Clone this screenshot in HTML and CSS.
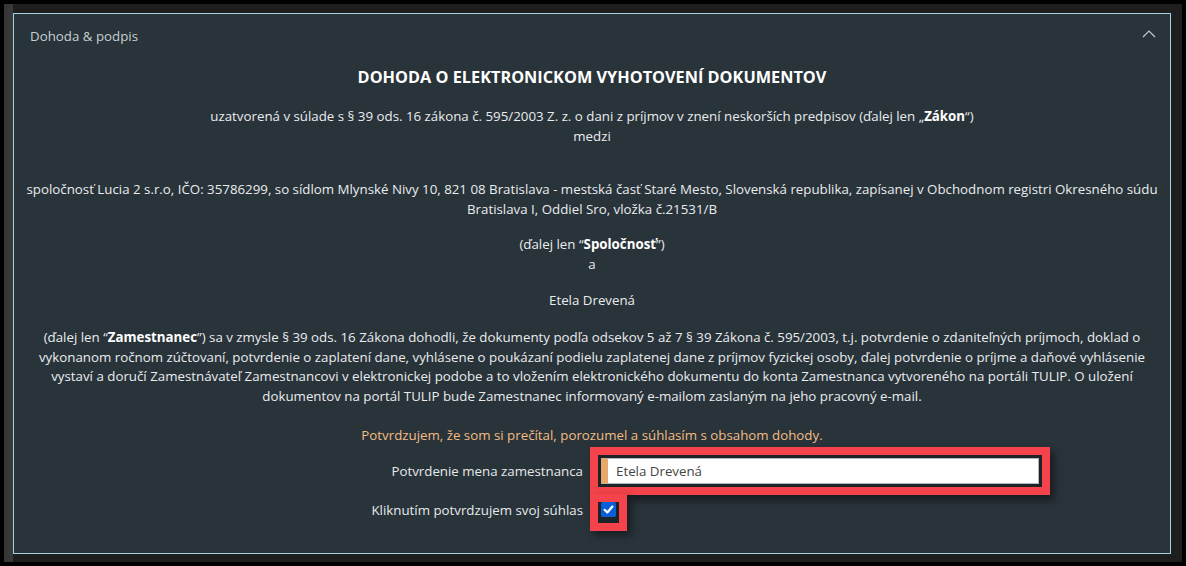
FILE: index.html
```html
<!DOCTYPE html>
<html lang="sk">
<head>
  <meta charset="UTF-8" />
  <title>Dohoda &amp; podpis</title>
  <link rel="stylesheet" href="styles.css">
</head>
<body>
  <div class="screen">
    <section class="panel">
      <div class="panel-head">
        <span>Dohoda &amp; podpis</span>
        <svg class="chevron" width="14" height="8" viewBox="0 0 14 8">
          <polyline points="1,7 7,1 13,7" fill="none" stroke="#c3cbcf" stroke-width="1.2"/>
        </svg>
      </div>

      <div class="panel-body">
        <h2 class="doc-title">DOHODA O ELEKTRONICKOM VYHOTOVENÍ DOKUMENTOV</h2>

        <p class="intro">uzatvorená v súlade s § 39 ods. 16 zákona č. 595/2003 Z. z. o dani z príjmov v znení neskorších predpisov (ďalej len „<b>Zákon</b>“)<br>medzi</p>

        <p class="party">spoločnosť Lucia 2 s.r.o, IČO: 35786299, so sídlom Mlynské Nivy 10, 821 08 Bratislava - mestská časť Staré Mesto, Slovenská republika, zapísanej v Obchodnom registri Okresného súdu<br>Bratislava I, Oddiel Sro, vložka č.21531/B</p>

        <p class="alias">(ďalej len “<b>Spoločnosť</b>”)<br>a</p>

        <p class="employee">Etela Drevená</p>

        <p class="terms">(ďalej len “<b>Zamestnanec</b>”) sa v zmysle § 39 ods. 16 Zákona dohodli, že dokumenty podľa odsekov 5 až 7 § 39 Zákona č. 595/2003, t.j. potvrdenie o zdaniteľných príjmoch, doklad o<br>vykonanom ročnom zúčtovaní, potvrdenie o zaplatení dane, vyhlásene o poukázaní podielu zaplatenej dane z príjmov fyzickej osoby, ďalej potvrdenie o príjme a daňové vyhlásenie<br>vystaví a doručí Zamestnávateľ Zamestnancovi v elektronickej podobe a to vložením elektronického dokumentu do konta Zamestnanca vytvoreného na portáli TULIP. O uložení<br>dokumentov na portál TULIP bude Zamestnanec informovaný e-mailom zaslaným na jeho pracovný e-mail.</p>

        <p class="confirm">Potvrdzujem, že som si prečítal, porozumel a súhlasím s obsahom dohody.</p>

        <div class="form">
          <label class="form-label" for="name">Potvrdenie mena zamestnanca</label>
          <div class="form-field">
            <input id="name" class="name-input mark" type="text" value="Etela Drevená">
          </div>

          <span class="form-label">Kliknutím potvrdzujem svoj súhlas</span>
          <div class="form-field">
            <span class="mark-check">
              <span class="check">
                <svg width="15" height="15" viewBox="0 0 15 15">
                  <polyline points="3.6,7.8 6.3,10.4 11.4,4.6" fill="none" stroke="#fff" stroke-width="2.2" stroke-linecap="round" stroke-linejoin="round"/>
                </svg>
              </span>
            </span>
          </div>
        </div>
      </div>
    </section>
  </div>
</body>
</html>
```
FILE: styles.css
```css
html, body {
  margin: 0;
  height: 100%;
}

body {
  background: #000;
  padding: 4px;
  box-sizing: border-box;
  font-family: "Open Sans", "Noto Sans", sans-serif;
  font-size: 13.3px;
  color: #e9ecee;
}

.screen {
  height: 100%;
  box-sizing: border-box;
  padding: 9px 11px 8px 9px;
  background: linear-gradient(to right, #353535 0, #3b3b3b 9px, #1e1e1e 9px);
}

.panel {
  height: 100%;
  box-sizing: border-box;
  border: 1px solid #a3d3e2;
  background: #29333a;
}

.panel-head {
  display: flex;
  align-items: center;
  justify-content: space-between;
  padding: 12px 14px 12px 16px;
  line-height: 20px;
  color: #c6cfd3;
}

.chevron {
  display: block;
  margin-top: -4px;
}

.panel-body {
  padding: 0 10px;
  text-align: center;
  line-height: 20px;
}

.panel-body p {
  margin: 0;
}

.panel-body b {
  color: #fff;
}

.doc-title {
  margin: 9px 0 0;
  font-size: 16.3px;
  line-height: 20px;
  font-weight: 700;
  color: #fff;
}

.intro {
  padding-top: 19px;
}

.party {
  padding-top: 33px;
}

.alias {
  padding-top: 15px;
}

.employee {
  padding-top: 16px;
}

.terms {
  padding-top: 18px;
  line-height: 19.7px;
}

.confirm {
  padding-top: 18px;
  color: #f3bc82;
}

.form {
  display: grid;
  grid-template-columns: 1fr 1fr;
  column-gap: 18px;
  row-gap: 16px;
  align-items: center;
  margin-top: 13px;
}

.form-label {
  text-align: right;
  color: #e6e9eb;
}

.form-field {
  display: flex;
  align-items: center;
}

.name-input {
  width: 438px;
  height: 26px;
  box-sizing: border-box;
  margin: 0;
  padding: 0 0 0 8px;
  border: 1px solid #b5b5b5;
  border-left: 7px solid #e9a86b;
  background: #fff;
  font-family: inherit;
  font-size: 13.3px;
  color: #444;
  outline: none;
}

/* red highlight frames from the annotated screenshot */
.mark {
  box-shadow: 0 0 0 3px #1d2428, 0 0 0 11px #f4434a, 4px 5px 8px 11px rgba(0, 0, 0, 0.45);
}

.mark-check {
  display: block;
  box-shadow: 0 3px 0 3px #1d2428, 0 3px 0 11px #f4434a, 4px 7px 8px 11px rgba(0, 0, 0, 0.45);
}

.check {
  display: block;
  width: 15px;
  height: 15px;
  border-radius: 2px;
  background: #0a5ed8;
}

.check svg {
  display: block;
}
```
